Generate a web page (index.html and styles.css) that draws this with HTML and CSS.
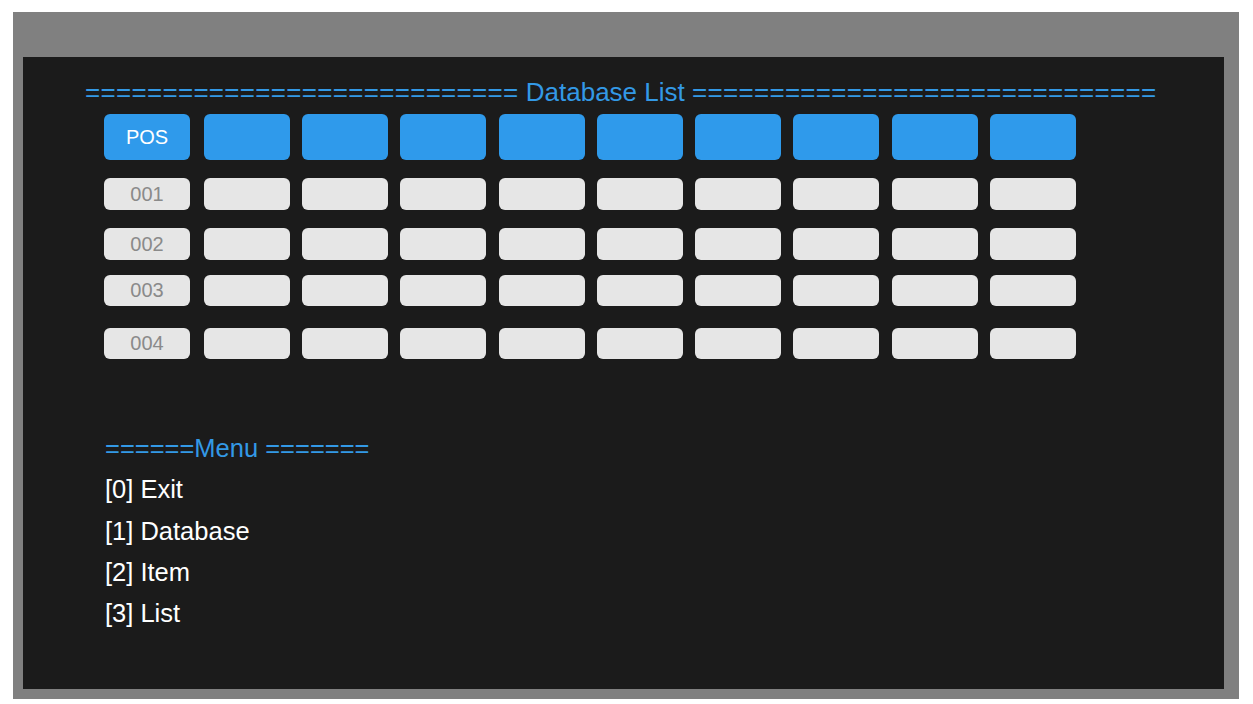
FILE: index.html
```html
<!DOCTYPE html>
<html>
<head>
<meta charset="utf-8">
<link rel="stylesheet" href="styles.css">
</head>
<body>
<div class="frame">
  <div class="screen">
    <div class="title"><span class="rule">============================</span> Database List <span class="rule">==============================</span></div>
    <div class="table">
      <div class="row head">
        <div class="cell">POS</div><div class="cell"></div><div class="cell"></div><div class="cell"></div><div class="cell"></div><div class="cell"></div><div class="cell"></div><div class="cell"></div><div class="cell"></div><div class="cell"></div>
      </div>
      <div class="row r1">
        <div class="cell">001</div><div class="cell"></div><div class="cell"></div><div class="cell"></div><div class="cell"></div><div class="cell"></div><div class="cell"></div><div class="cell"></div><div class="cell"></div><div class="cell"></div>
      </div>
      <div class="row r2">
        <div class="cell">002</div><div class="cell"></div><div class="cell"></div><div class="cell"></div><div class="cell"></div><div class="cell"></div><div class="cell"></div><div class="cell"></div><div class="cell"></div><div class="cell"></div>
      </div>
      <div class="row r3">
        <div class="cell">003</div><div class="cell"></div><div class="cell"></div><div class="cell"></div><div class="cell"></div><div class="cell"></div><div class="cell"></div><div class="cell"></div><div class="cell"></div><div class="cell"></div>
      </div>
      <div class="row r4">
        <div class="cell">004</div><div class="cell"></div><div class="cell"></div><div class="cell"></div><div class="cell"></div><div class="cell"></div><div class="cell"></div><div class="cell"></div><div class="cell"></div><div class="cell"></div>
      </div>
    </div>
    <div class="menu">
      <div class="menu-title">======Menu =======</div>
      <div class="menu-item">[0] Exit</div>
      <div class="menu-item">[1] Database</div>
      <div class="menu-item">[2] Item</div>
      <div class="menu-item">[3] List</div>
    </div>
  </div>
</div>
</body>
</html>
```

FILE: styles.css
```css
html, body {
  margin: 0;
  padding: 0;
  background: #ffffff;
  font-family: "Liberation Sans", Arial, sans-serif;
}

.frame {
  margin: 12px 0 0 13px;
  width: 1226px;
  height: 687px;
  box-sizing: border-box;
  background: #808080;
  padding: 45px 15px 10px 10px;
}

.screen {
  height: 100%;
  background: #1b1b1b;
  box-sizing: border-box;
  padding: 20px 0 0 0;
}

.title {
  color: #3399e6;
  font-size: 26px;
  line-height: 30px;
  padding-left: 62px;
  white-space: pre;
}

.rule {
  letter-spacing: 0.3px;
}

.table {
  margin-top: 7px;
  padding-left: 81px;
  display: flex;
  flex-direction: column;
}

.row {
  display: flex;
  gap: 12.25px;
}

.cell {
  width: 86px;
  height: 32px;
  border-radius: 6px;
  background: #e6e6e6;
  color: #8a8a8a;
  font-size: 20px;
  display: flex;
  align-items: center;
  justify-content: center;
}

.cell:first-child {
  margin-right: 1.5px;
}

.head .cell {
  height: 46px;
  background: #2f9aeb;
  color: #ffffff;
}

.r1 { margin-top: 18px; }
.r2 { margin-top: 18px; }
.r3 { margin-top: 15px; }
.r3 .cell { height: 31px; }
.r4 { margin-top: 22px; }
.r4 .cell { height: 31px; }

.menu {
  margin-top: 69px;
  padding-left: 82px;
  font-size: 25.5px;
  line-height: 41.3px;
}

.menu-title {
  color: #3399e6;
}

.menu-item {
  color: #ffffff;
}
```
